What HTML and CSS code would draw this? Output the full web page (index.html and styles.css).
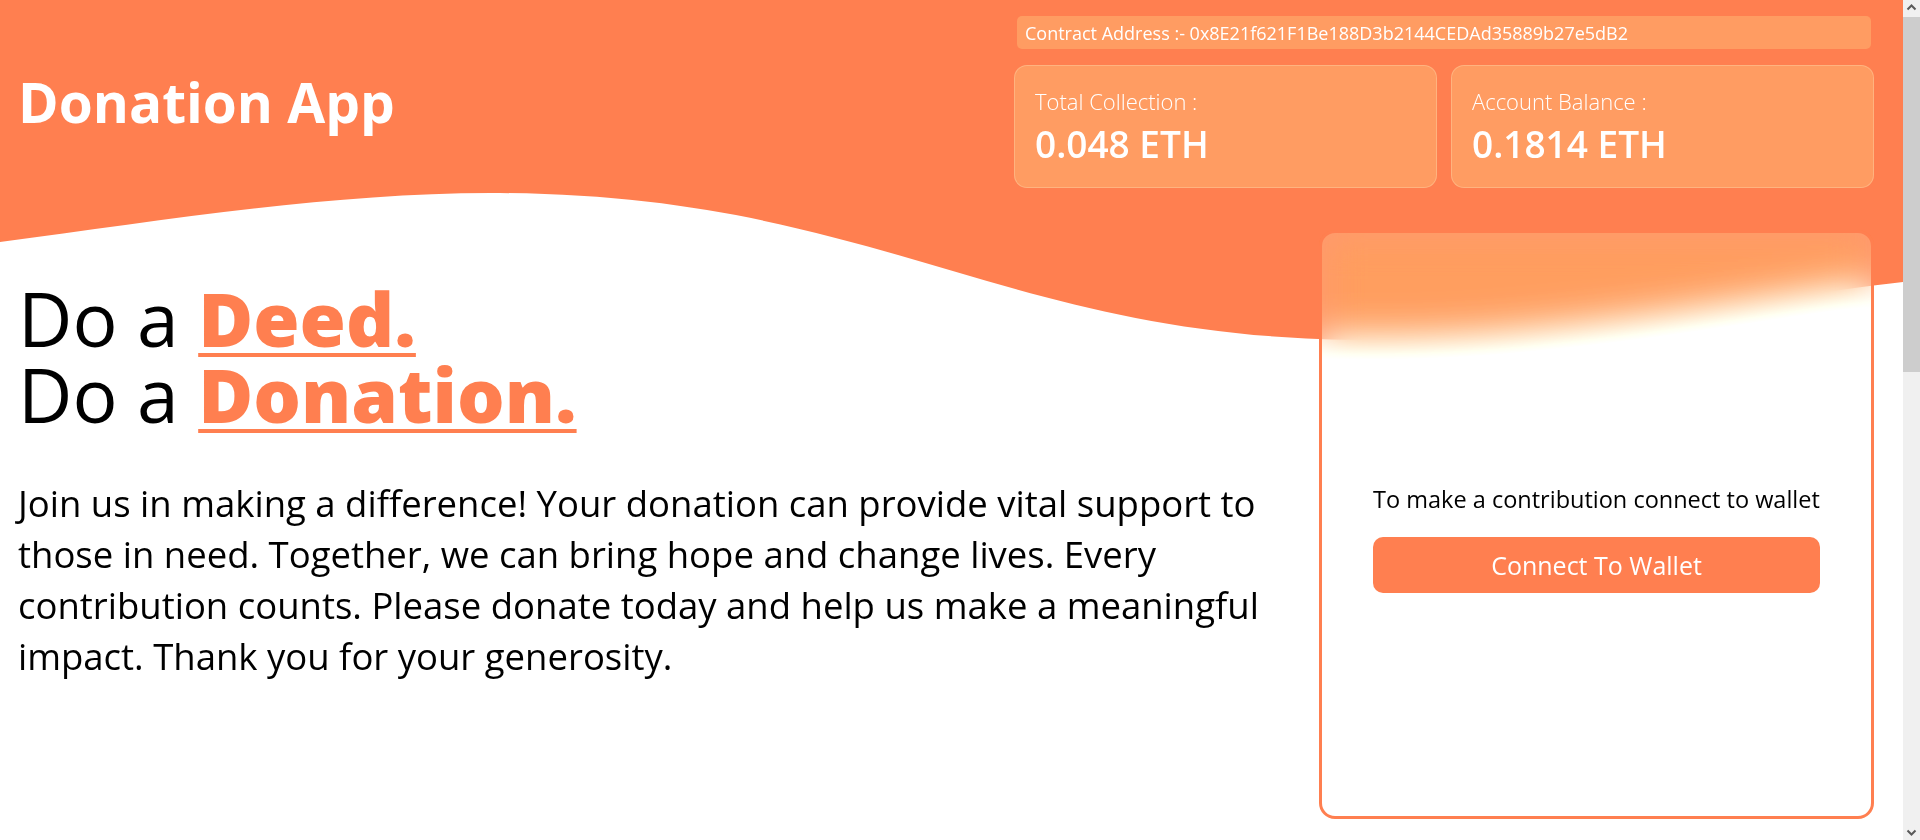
FILE: index.html
```html
<!DOCTYPE html>
<html lang="en">
<head>
<meta charset="utf-8">
<title>Donation App</title>
<link rel="stylesheet" href="styles.css">
</head>
<body>
<div class="page">
  <svg class="wave" viewBox="0 0 1903 360" preserveAspectRatio="none" aria-hidden="true">
    <path d="M0,0 H1903 V282 C1760,298 1570,340 1370,340 C1000,340 880,193 490,193 C330,193 160,221 0,242 Z" fill="#FF7F50"/>
  </svg>

  <header class="topbar">
    <h1 class="brand">Donation App</h1>
    <div class="stats">
      <div class="contract">Contract Address :- 0x8E21f621F1Be188D3b2144CEDAd35889b27e5dB2</div>
      <div class="stat-row">
        <div class="stat">
          <div class="stat-label">Total Collection :</div>
          <div class="stat-value">0.048 ETH</div>
        </div>
        <div class="stat">
          <div class="stat-label">Account Balance :</div>
          <div class="stat-value">0.1814 ETH</div>
        </div>
      </div>
    </div>
  </header>

  <main class="hero">
    <section class="intro">
      <h2 class="headline">
        <span class="line">Do a <span class="accent">Deed.</span></span>
        <span class="line">Do a <span class="accent">Donation.</span></span>
      </h2>
      <p class="lead">Join us in making a difference! Your donation can provide vital support to those in need. Together, we can bring hope and change lives. Every contribution counts. Please donate today and help us make a meaningful impact. Thank you for your generosity.</p>
    </section>

    <aside class="wallet-card">
      <p class="wallet-text">To make a contribution connect to wallet</p>
      <button class="wallet-btn" type="button">Connect To Wallet</button>
    </aside>
  </main>
</div>

<div class="scrollbar" aria-hidden="true">
  <span class="sb-btn">
    <svg width="17" height="17" viewBox="0 0 17 17"><polyline points="4.5,9.5 8.5,5.5 12.5,9.5" fill="none" stroke="#5a5a5a" stroke-width="2"/></svg>
  </span>
  <span class="sb-thumb"></span>
  <span class="sb-track"></span>
  <span class="sb-btn">
    <svg width="17" height="17" viewBox="0 0 17 17"><polyline points="4.5,7.5 8.5,11.5 12.5,7.5" fill="none" stroke="#5a5a5a" stroke-width="2"/></svg>
  </span>
</div>
</body>
</html>
```

FILE: styles.css
```css
* {
  box-sizing: border-box;
}

html,
body {
  margin: 0;
  padding: 0;
  background: #ffffff;
}

body {
  font-family: "Open Sans", "Noto Sans", sans-serif;
  color: #000000;
  overflow-x: hidden;
}

.page {
  position: relative;
  width: calc(100% - 17px);
  min-height: 1900px;
}

.wave {
  position: absolute;
  top: 0;
  left: 0;
  width: 100%;
  height: 360px;
  z-index: 0;
  display: block;
}

.topbar {
  position: relative;
  z-index: 1;
  display: flex;
  align-items: center;
  justify-content: space-between;
  padding: 16px 29px 0 18px;
}

.brand {
  margin: 0;
  color: #ffffff;
  font-size: 55px;
  font-weight: 700;
  line-height: 1.2;
}

.stats {
  width: 860px;
  display: flex;
  flex-direction: column;
  gap: 16px;
}

.contract {
  margin: 0 3px;
  height: 33px;
  padding: 0 8px;
  display: flex;
  align-items: center;
  background: #ff9c62;
  border-radius: 5px;
  color: #ffffff;
  font-size: 18px;
  white-space: nowrap;
}

.stat-row {
  display: flex;
  gap: 14px;
}

.stat {
  flex: 1;
  height: 123px;
  padding: 19px 20px 0;
  background: #ff9c62;
  border: 1px solid rgba(255, 190, 140, 0.7);
  border-radius: 13px;
  color: #ffffff;
}

.stat-label {
  font-size: 22px;
  font-weight: 300;
  line-height: 32px;
}

.stat-value {
  font-size: 37px;
  font-weight: 600;
  line-height: 54px;
}

.hero {
  position: relative;
  z-index: 1;
  display: flex;
  align-items: flex-start;
  gap: 40px;
  margin-top: 42px;
  padding: 0 29px 0 18px;
}

.intro {
  flex: 1;
  padding-top: 50px;
}

.headline {
  margin: 0;
  font-size: 75px;
  font-weight: 400;
  line-height: 76px;
}

.headline .line {
  display: block;
}

.accent {
  color: #ff7f50;
  font-weight: 800;
  text-decoration: underline;
  text-decoration-thickness: 4px;
  text-underline-offset: 6px;
}

.lead {
  margin: 46px 0 0;
  font-size: 36.5px;
  line-height: 51px;
}

.wallet-card {
  width: 555px;
  height: 589px;
  flex: none;
  display: flex;
  flex-direction: column;
  align-items: center;
  justify-content: center;
  padding: 27px 51px 0;
  border: 3px solid #ff7f50;
  border-radius: 16px;
  background: rgba(255, 255, 255, 0.2);
  -webkit-backdrop-filter: blur(20px) saturate(1.45) brightness(1.15);
  backdrop-filter: blur(20px) saturate(1.45) brightness(1.15);
}

.wallet-text {
  margin: 0 0 22px;
  font-size: 23.5px;
  line-height: 32px;
  color: #000000;
  white-space: nowrap;
}

.wallet-btn {
  width: 100%;
  height: 56px;
  border: 0;
  border-radius: 10px;
  background: #ff7f50;
  color: #ffffff;
  font-family: inherit;
  font-size: 25px;
  cursor: pointer;
}

.scrollbar {
  position: fixed;
  top: 0;
  right: 0;
  bottom: 0;
  width: 17px;
  z-index: 5;
  display: flex;
  flex-direction: column;
  background: #f0f0f0;
}

.sb-btn {
  display: block;
  width: 17px;
  height: 17px;
  flex: none;
}

.sb-btn svg {
  display: block;
}

.sb-thumb {
  display: block;
  height: 355px;
  flex: none;
  background: #cdcdcd;
}

.sb-track {
  display: block;
  flex: 1;
}
```
